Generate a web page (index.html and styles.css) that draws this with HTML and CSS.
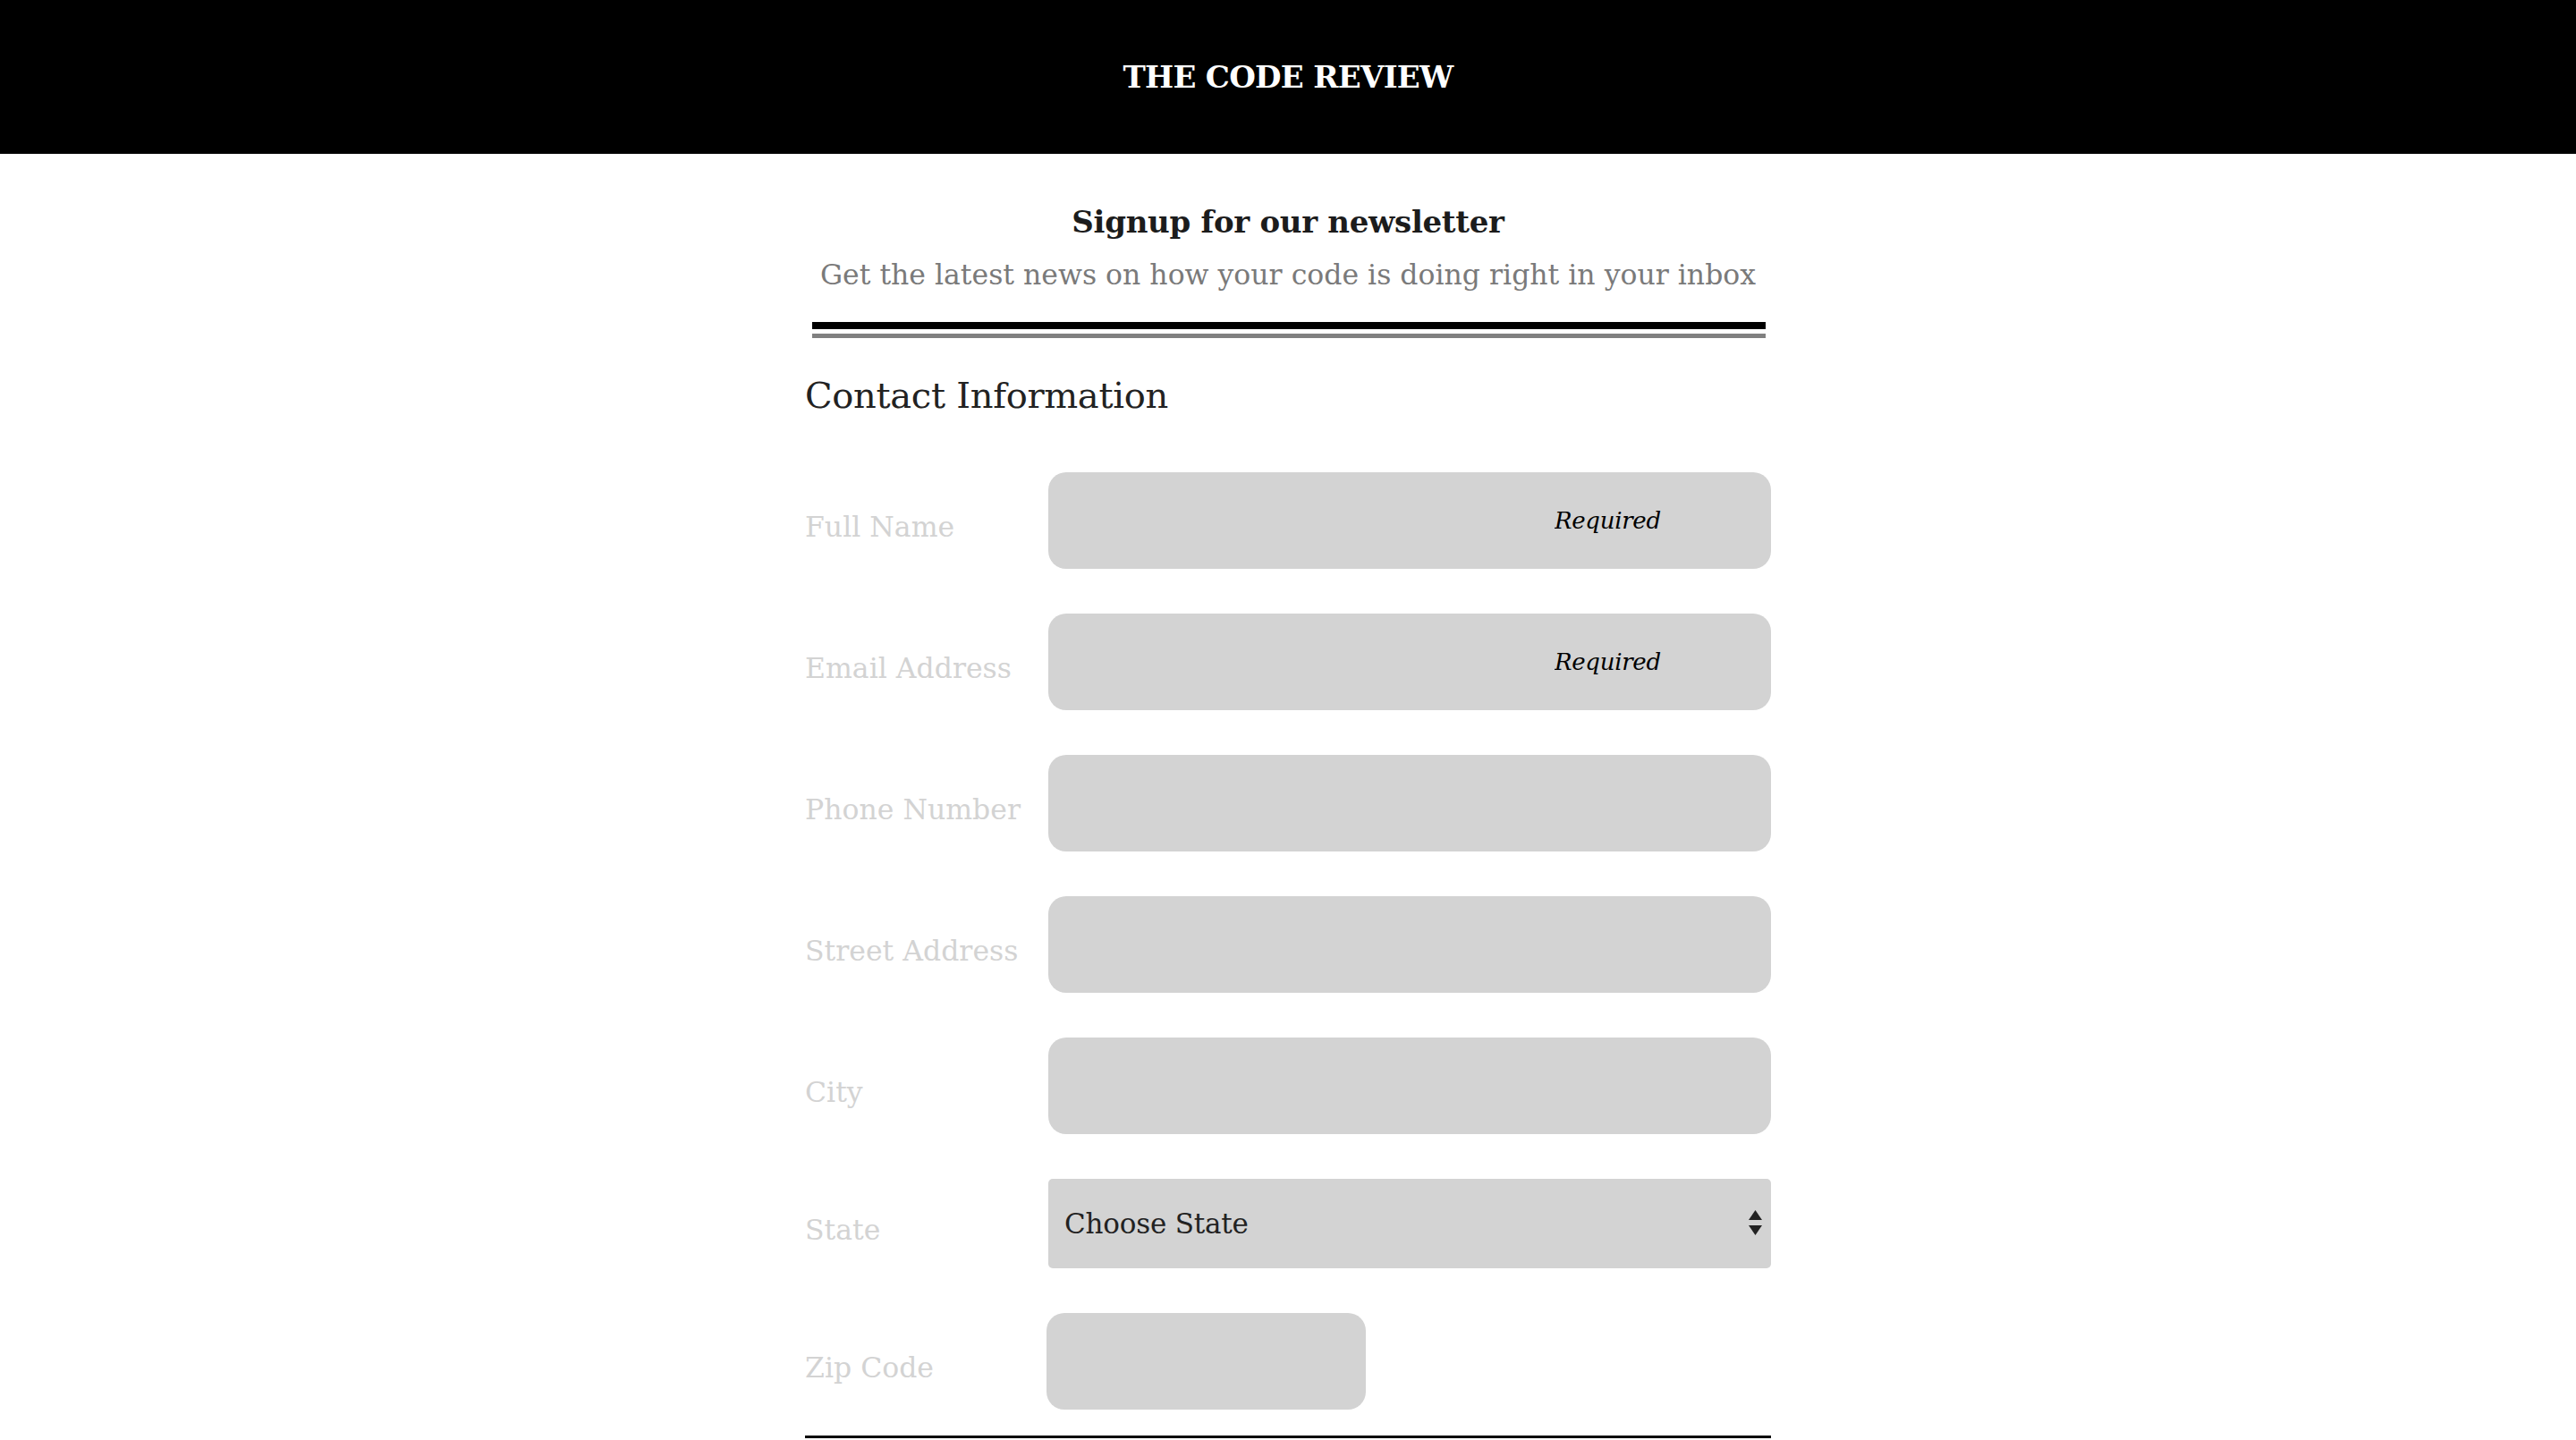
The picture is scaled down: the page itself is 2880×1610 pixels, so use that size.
FILE: index.html
```html
<!DOCTYPE html>
<html lang="en">
<head>
<meta charset="utf-8">
<title>The Code Review</title>
<link rel="stylesheet" href="styles.css">
</head>
<body>
<header class="masthead">
  <h1 class="masthead-title">THE CODE REVIEW</h1>
</header>
<main class="page">
  <section class="intro">
    <h2 class="intro-title">Signup for our newsletter</h2>
    <p class="intro-sub">Get the latest news on how your code is doing right in your inbox</p>
  </section>
  <div class="double-rule"></div>
  <form class="contact">
    <h3 class="contact-title">Contact Information</h3>
    <div class="field">
      <label class="field-label" for="name">Full Name</label>
      <input class="field-input req" id="name" type="text" placeholder="Required">
    </div>
    <div class="field">
      <label class="field-label" for="email">Email Address</label>
      <input class="field-input req" id="email" type="email" placeholder="Required">
    </div>
    <div class="field">
      <label class="field-label" for="phone">Phone Number</label>
      <input class="field-input" id="phone" type="tel">
    </div>
    <div class="field">
      <label class="field-label" for="street">Street Address</label>
      <input class="field-input" id="street" type="text">
    </div>
    <div class="field">
      <label class="field-label" for="city">City</label>
      <input class="field-input" id="city" type="text">
    </div>
    <div class="field">
      <label class="field-label" for="state">State</label>
      <div class="select-wrap">
        <select class="field-select" id="state">
          <option>Choose State</option>
        </select>
        <svg class="select-arrows" width="15" height="28" viewBox="0 0 15 28" aria-hidden="true">
          <polygon points="7.5,0 15,11 0,11" fill="#222"/>
          <polygon points="0,17 15,17 7.5,28" fill="#222"/>
        </svg>
      </div>
    </div>
    <div class="field">
      <label class="field-label" for="zip">Zip Code</label>
      <input class="field-input zip" id="zip" type="text">
    </div>
  </form>
  <div class="end-rule"></div>
</main>
</body>
</html>
```

FILE: styles.css
```css
html, body {
  margin: 0;
  padding: 0;
  background: #fff;
}

body {
  font-family: "DejaVu Serif", "Liberation Serif", serif;
  color: #222;
}

.masthead {
  background: #000;
  height: 172px;
  display: flex;
  align-items: center;
  justify-content: center;
}

.masthead-title {
  margin: 0;
  color: #fff;
  font-size: 34px;
  font-weight: bold;
  line-height: 40px;
  letter-spacing: -0.7px;
}

.page {
  width: 1080px;
  margin: 0 auto;
}

.intro {
  margin-top: 54px;
  text-align: center;
}

.intro-title {
  margin: 0;
  font-size: 34px;
  line-height: 44px;
  font-weight: bold;
  letter-spacing: -0.3px;
  color: #1c1c1c;
}

.intro-sub {
  margin: 19px 0 0 0;
  font-size: 31.5px;
  line-height: 36px;
  color: #7a7a7a;
}

.double-rule {
  margin: 35px 6px 0 8px;
  height: 5px;
  border-top: 8px solid #000;
  border-bottom: 5px solid #808080;
}

.contact {
  display: flex;
  flex-direction: column;
  gap: 50px;
}

.contact-title {
  margin: 39px 0 11px 0;
  font-size: 40px;
  line-height: 50px;
  font-weight: normal;
  letter-spacing: -0.3px;
  color: #222;
}

.field {
  display: grid;
  grid-template-columns: 272px 1fr;
  align-items: center;
}

.field-label {
  font-size: 31.5px;
  line-height: 40px;
  color: #d3d3d3;
  margin-top: 14px;
}

.field-input {
  box-sizing: border-box;
  height: 108px;
  width: 100%;
  border: none;
  border-radius: 20px;
  background: #d3d3d3;
  font-family: "DejaVu Serif", serif;
  font-size: 26px;
  letter-spacing: -0.3px;
  padding: 0 20px;
  outline: none;
}

.field-input.req {
  padding-left: 566px;
}

.field-input::placeholder {
  color: #000;
  font-style: italic;
  opacity: 1;
}

.field-input.zip {
  width: 357px;
  margin-left: -2px;
}

.select-wrap {
  position: relative;
}

.field-select {
  box-sizing: border-box;
  width: 100%;
  height: 100px;
  border: none;
  border-radius: 5px;
  background: #d3d3d3;
  appearance: none;
  -webkit-appearance: none;
  font-family: "DejaVu Serif", serif;
  font-size: 31px;
  letter-spacing: -0.2px;
  color: #222;
  padding: 0 18px;
  outline: none;
}

.select-arrows {
  position: absolute;
  right: 10px;
  top: 35px;
  pointer-events: none;
}

.end-rule {
  margin-top: 29px;
  height: 3px;
  background: #000;
}
```
